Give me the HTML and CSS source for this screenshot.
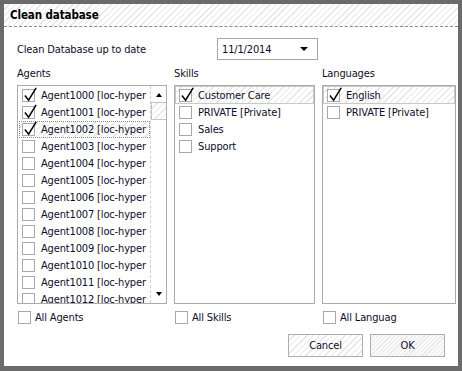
FILE: index.html
```html
<!DOCTYPE html>
<html>
<head>
<meta charset="utf-8">
<link rel="stylesheet" href="styles.css">
</head>
<body>
<div class="window">
  <div class="titlebar">Clean database</div>
  <div class="content">
    <div class="date-row">
      <span class="date-label">Clean Database up to date</span>
      <div class="dropdown"><span>11/1/2014</span><span class="arrow"></span></div>
    </div>
    <div class="columns">
      <div class="col col-agents">
        <div class="col-label">Agents</div>
        <div class="listbox agents">
          <div class="items">
            <div class="item"><span class="cb checked"><svg viewBox="0 0 16 16"><path d="M2 9 L6 14 L14 1" /></svg></span><span class="txt">Agent1000 [loc-hyper</span></div>
            <div class="item"><span class="cb checked"><svg viewBox="0 0 16 16"><path d="M2 9 L6 14 L14 1" /></svg></span><span class="txt">Agent1001 [loc-hyper</span></div>
            <div class="item focus"><span class="cb checked"><svg viewBox="0 0 16 16"><path d="M2 9 L6 14 L14 1" /></svg></span><span class="txt">Agent1002 [loc-hyper</span></div>
            <div class="item"><span class="cb"></span><span class="txt">Agent1003 [loc-hyper</span></div>
            <div class="item"><span class="cb"></span><span class="txt">Agent1004 [loc-hyper</span></div>
            <div class="item"><span class="cb"></span><span class="txt">Agent1005 [loc-hyper</span></div>
            <div class="item"><span class="cb"></span><span class="txt">Agent1006 [loc-hyper</span></div>
            <div class="item"><span class="cb"></span><span class="txt">Agent1007 [loc-hyper</span></div>
            <div class="item"><span class="cb"></span><span class="txt">Agent1008 [loc-hyper</span></div>
            <div class="item"><span class="cb"></span><span class="txt">Agent1009 [loc-hyper</span></div>
            <div class="item"><span class="cb"></span><span class="txt">Agent1010 [loc-hyper</span></div>
            <div class="item"><span class="cb"></span><span class="txt">Agent1011 [loc-hyper</span></div>
            <div class="item"><span class="cb"></span><span class="txt">Agent1012 [loc-hyper</span></div>
          </div>
          <div class="scrollbar">
            <span class="up"></span>
            <span class="thumb"></span>
            <span class="spacer"></span>
            <span class="down"></span>
          </div>
        </div>
        <div class="all"><span class="cb"></span><span class="txt">All Agents</span></div>
      </div>
      <div class="col col-skills">
        <div class="col-label">Skills</div>
        <div class="listbox">
          <div class="items">
            <div class="item selected"><span class="cb checked"><svg viewBox="0 0 16 16"><path d="M2 9 L6 14 L14 1" /></svg></span><span class="txt">Customer Care</span></div>
            <div class="item"><span class="cb"></span><span class="txt">PRIVATE [Private]</span></div>
            <div class="item"><span class="cb"></span><span class="txt">Sales</span></div>
            <div class="item"><span class="cb"></span><span class="txt">Support</span></div>
          </div>
        </div>
        <div class="all"><span class="cb"></span><span class="txt">All Skills</span></div>
      </div>
      <div class="col col-langs">
        <div class="col-label">Languages</div>
        <div class="listbox">
          <div class="items">
            <div class="item selected"><span class="cb checked"><svg viewBox="0 0 16 16"><path d="M2 9 L6 14 L14 1" /></svg></span><span class="txt">English</span></div>
            <div class="item"><span class="cb"></span><span class="txt">PRIVATE [Private]</span></div>
          </div>
        </div>
        <div class="all"><span class="cb"></span><span class="txt">All Languag</span></div>
      </div>
    </div>
    <div class="buttons">
      <button class="btn">Cancel</button>
      <button class="btn ok">OK</button>
    </div>
  </div>
</div>
</body>
</html>
```

FILE: styles.css
```css
* { box-sizing: border-box; }
html, body { margin: 0; padding: 0; background: #fff; }
body {
  font-family: "DejaVu Sans Condensed", "DejaVu Sans", sans-serif;
  font-size: 11px;
  letter-spacing: -0.15px;
  color: #0d0d2b;
}
.window {
  width: 462px;
  height: 371px;
  border: 4px solid #6b6b6b;
  border-bottom-width: 5px;
  background: #fff;
  display: flex;
  flex-direction: column;
}
.titlebar, .btn, .thumb, .item.selected, .item.focus {
  background: repeating-linear-gradient(135deg, #ffffff 0 3.5px, #e6e6e6 3.5px 4.5px);
}
.btn.ok {
  background: repeating-linear-gradient(135deg, #fafafa 0 2px, #e9e9e9 2px 3px);
}
.titlebar {
  height: 23px;
  border-bottom: 1px dashed #8a8a8a;
  padding: 3px 0 0 6px;
  font-weight: bold;
  font-size: 11.5px;
  letter-spacing: -0.1px;
  color: #000;
  line-height: 16px;
}
.content {
  flex: 1;
  padding: 11px 0 0 13px;
  display: flex;
  flex-direction: column;
}
.date-row {
  display: flex;
  align-items: center;
  height: 22px;
}
.date-label { width: 200px; }
.dropdown {
  width: 101px;
  height: 22px;
  border: 1px solid #a5a5a5;
  display: flex;
  align-items: center;
  justify-content: space-between;
  padding: 0 9px 0 4px;
}
.arrow {
  width: 0; height: 0;
  border-left: 4px solid transparent;
  border-right: 4px solid transparent;
  border-top: 4px solid #000;
}
.columns {
  display: flex;
  gap: 7px;
  margin-top: 7px;
}
.col { display: flex; flex-direction: column; }
.col-agents { width: 150px; }
.col-skills { width: 141px; }
.col-langs { width: 134px; }
.col-label { height: 14px; line-height: 14px; margin-bottom: 4px; }
.listbox {
  height: 219px;
  border: 1px solid #ababab;
  display: flex;
  overflow: hidden;
}
.items { flex: 1; overflow: hidden; padding-top: 1px; }
.item {
  position: relative;
  height: 17px;
  display: flex;
  align-items: center;
  padding-left: 3px;
  white-space: nowrap;
  border: 1px solid transparent;
}
.item.selected { border-color: #c9c9c9; margin-top: -1px; height: 18px; }
.item.focus { border: 1px dotted #8c8c8c; margin-left: 1px; padding-left: 2px; }
.cb {
  position: relative;
  flex: none;
  width: 13px;
  height: 13px;
  border: 1px solid #a9a9a9;
  background: #fff;
}
.cb svg {
  position: absolute;
  left: 0px;
  top: -3px;
  width: 15px;
  height: 15px;
  fill: none;
  stroke: #000;
  stroke-width: 1.6;
}
.item .txt { margin-left: 6px; }
.scrollbar {
  width: 16px;
  border-left: 1px dashed #cfcfcf;
  display: flex;
  flex-direction: column;
  align-items: center;
}
.up, .down {
  width: 0; height: 0;
  border-left: 3.5px solid transparent;
  border-right: 3.5px solid transparent;
}
.up { border-bottom: 4px solid #000; margin-top: 7px; }
.down { border-top: 4px solid #000; margin-bottom: 7px; }
.thumb {
  width: 16px;
  height: 18px;
  margin-top: 5px;
  border: 1px solid #c5c5c5;
}
.spacer { flex: 1; }
.all {
  display: flex;
  align-items: center;
  height: 14px;
  margin-top: 6px;
  padding-left: 1px;
}
.all .txt { margin-left: 4px; }
.buttons {
  display: flex;
  justify-content: flex-end;
  gap: 7px;
  margin-top: 10px;
  padding-right: 13px;
}
.btn {
  width: 75px;
  height: 23px;
  border: 1px solid #adadad;
  font-family: inherit;
  font-size: 11px;
  letter-spacing: -0.15px;
  color: #0d0d2b;
  padding: 0;
}
```
